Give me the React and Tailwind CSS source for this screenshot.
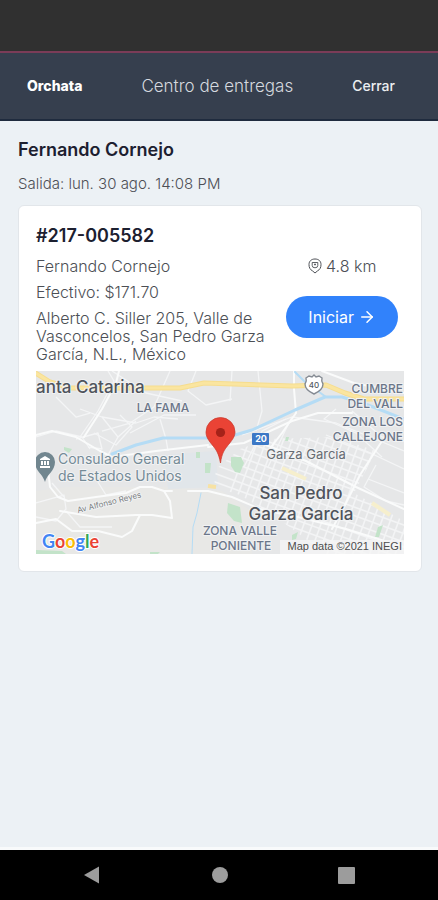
import { ArrowRight } from 'lucide-react';

const order = {
  number: '#217-005582',
  customer: 'Fernando Cornejo',
  payment: 'Efectivo: $171.70',
  address: 'Alberto C. Siller 205, Valle de Vasconcelos, San Pedro Garza García, N.L., México',
  distance: '4.8 km',
};

const thinRoads = [
  'M72 0 L78 10 L62 40 L44 66',
  'M134 0 L118 36 L94 52 L66 60',
  'M44 38 L66 46 L82 66 L72 84',
  'M66 46 L100 52 L118 46 L142 48',
  'M82 66 L100 50',
  'M58 62 L80 74 L96 56 L84 44',
  'M94 62 L128 44 L160 44',
  'M124 48 L130 68 L132 80',
  'M40 68 L62 62 L66 78 L52 76',
  'M0 66 L20 60 L46 66 L54 78',
  'M20 26 L40 46 L54 42',
  'M76 0 L110 22 L146 30',
  'M160 0 L152 20 L170 34 L196 28',
  'M196 0 L194 30',
  'M222 0 L226 40 L220 60',
  'M0 132 L28 124 L30 138 L20 150 L0 146',
  'M16 112 L28 126',
  'M30 140 L44 156 L76 156',
  'M60 108 L70 124 L90 120',
  'M206 64 L256 46 L300 52 L368 80',
  'M208 96 L226 60 L250 48',
  'M232 96 L248 62 L256 46',
  'M300 38 L288 48 L320 62 L346 86',
  'M316 40 L346 66 L368 70',
  'M290 64 L330 80 L368 98',
  'M340 94 L328 116 L350 130 L368 134',
  'M332 108 L368 122',
];

const wideRoads = [
  'M83 0 L80 12 L66 38 L48 66',
  'M12 98 L14 116 L22 126 L32 130 L60 126 L90 122 L104 116 L116 116 L128 120 L136 120',
  'M152 120 L172 120 L196 126 L224 138',
  'M0 64 L16 60 L40 66 L64 80 L76 86 L120 80 L172 74',
  'M0 152 L20 148 L36 160 L62 160 L86 166 L96 160 L104 144',
  'M24 140 L60 146 L100 144 L116 144 L136 147 L134 130 L128 120',
  'M172 76 L208 72 L256 50 L282 42 L316 42',
  'M258 0 L258 18 L260 42 L246 62 L232 80',
  'M286 0 L318 12 L368 22',
  'M224 138 L262 146 L310 158 L368 176',
  'M230 74 L270 90 L320 116 L368 138',
  'M346 70 L324 104 L310 132 L296 158',
];

// dense street grid around downtown, drawn slightly rotated
const gridColumns = Array.from({ length: 23 }, (_, i) => 200 + i * 8);
const gridRows = Array.from({ length: 14 }, (_, i) => 66 + i * 8);

const parks = [
  'M195 86 L205 86 L208 92 L204 102 L199 101 L195 95 Z',
  'M192 132 L204 136 L206 152 L198 150 L191 142 Z',
  'M169 92 L175 92 L174 102 L169 102 Z',
  'M160 81 L164 81 L164 87 L160 87 Z',
  'M28 76 L36 78 L33 82 L28 79 Z',
  'M0 179 L26 180 L30 183 L0 183 Z',
  'M114 181 L124 181 L122 183 L114 183 Z',
  'M342 156 L347 154 L343 166 L339 166 Z',
  'M256 164 L262 161 L260 168 L256 169 Z',
  'M250 66 L253 66 L252 70 L249 70 Z',
];

const labels = [
  { text: 'anta Catarina', x: 0, y: 22, size: 17, color: '#4f545c', weight: 500, anchor: 'start' },
  { text: 'LA FAMA', x: 127, y: 41, size: 12, color: '#6b7689', weight: 500, anchor: 'middle' },
  { text: 'CUMBRE', x: 367, y: 22, size: 12, color: '#6b7689', weight: 500, anchor: 'end' },
  { text: 'DEL VALL', x: 367, y: 37, size: 12, color: '#6b7689', weight: 500, anchor: 'end' },
  { text: 'ZONA LOS', x: 367, y: 55, size: 12, color: '#6b7689', weight: 500, anchor: 'end' },
  { text: 'CALLEJONE', x: 367, y: 70, size: 12, color: '#6b7689', weight: 500, anchor: 'end' },
  { text: 'Garza García', x: 270, y: 88, size: 13, color: '#666b72', weight: 400, anchor: 'middle' },
  { text: 'Consulado General', x: 22, y: 93, size: 14, color: '#758b97', weight: 400, anchor: 'start' },
  { text: 'de Estados Unidos', x: 22, y: 110, size: 14, color: '#758b97', weight: 400, anchor: 'start' },
  { text: 'San Pedro', x: 265, y: 128, size: 17, color: '#4f545c', weight: 500, anchor: 'middle' },
  { text: 'Garza García', x: 265, y: 149, size: 17, color: '#4f545c', weight: 500, anchor: 'middle' },
  { text: 'ZONA VALLE', x: 204, y: 164, size: 12, color: '#6b7689', weight: 500, anchor: 'middle' },
  { text: 'PONIENTE', x: 205, y: 179, size: 12, color: '#6b7689', weight: 500, anchor: 'middle' },
];

const highway = 'M-2 1 L14 11 L34 17 L114 17 L144 17 L168 12 L256 15 L290 14 L309 22 L328 28 L370 28';

function DeliveryMap() {
  return (
    <svg
      viewBox="0 0 368 183"
      className="block w-full h-auto font-['Inter','Roboto',sans-serif]"
      role="img"
      aria-label="Mapa"
    >
      <defs>
        <clipPath id="downtown">
          <path d="M180 98 L204 78 L232 68 L300 66 L340 80 L318 122 L368 150 L368 183 L290 183 L240 146 L204 124 L178 116 Z" />
        </clipPath>
      </defs>
      <rect width="368" height="183" fill="#e6e7e8" />
      <path d="M0 120 L30 116 L130 116 L186 120 L216 140 L216 183 L0 183 Z" fill="#e8e8e6" />
      <path d="M128 84 L180 80 L182 116 L132 118 Z" fill="#e1e6ea" />

      <g fill="none" stroke="#f4f5f6" strokeWidth="1.3" strokeLinejoin="round">
        {thinRoads.map((d) => <path key={d} d={d} />)}
      </g>

      <g clipPath="url(#downtown)">
        <g transform="rotate(20 280 120)" stroke="#f3f4f5" strokeWidth="1.6">
          {gridColumns.map((x) => <line key={x} x1={x} y1="40" x2={x} y2="210" />)}
          {gridRows.map((y) => <line key={y} x1="160" y1={y} x2="390" y2={y} />)}
        </g>
      </g>

      <g fill="#c3e3c9">
        {parks.map((d) => <path key={d} d={d} />)}
      </g>

      <g fill="none" stroke="#f6efcd" strokeWidth="4">
        <path d="M246 97 L270 108" />
        <path d="M336 132 L354 144" />
        <path d="M172 115 L180 116" stroke="#f7e2a4" />
      </g>

      <g fill="none" stroke="#fafbfb" strokeWidth="2" strokeLinejoin="round" strokeLinecap="round">
        {wideRoads.map((d) => <path key={d} d={d} />)}
      </g>

      {/* river */}
      <g fill="none" stroke="#b5dcf5" strokeLinejoin="round" strokeLinecap="round">
        <path d="M76 83 L100 74 L127 67 L171 67 L199 64 L216 59 L259 39 L289 26 L306 26 L332 34 L368 48" strokeWidth="3" />
        <path d="M259 1 L268 10 L290 26" strokeWidth="2" />
        <path d="M165 122 L161 142 L157 156 L156 183" strokeWidth="1" />
      </g>

      {/* highway */}
      <path d={highway} fill="none" stroke="#f6dd8e" strokeWidth="5" strokeLinejoin="round" />
      <path d={highway} fill="none" stroke="#fae5a0" strokeWidth="3" strokeLinejoin="round" />

      <path
        d="M270 7 L273 5 L276 6 L278 4 L280 6 L283 5 L286 7 Q285 10 287 13 Q287 19 278 23 Q269 19 269 13 Q271 10 270 7 Z"
        fill="#ffffff"
        stroke="#858b93"
        strokeWidth="1.4"
      />
      <text x="278" y="17" fontSize="8" fontWeight="500" fill="#555a61" textAnchor="middle">40</text>

      <rect x="216" y="62" width="17" height="12" rx="1" fill="#3c78c6" />
      <text x="225" y="71" fontSize="9" fontWeight="700" fill="#ffffff" textAnchor="middle">20</text>

      <g stroke="#f1f2f3" strokeWidth="2" paintOrder="stroke" strokeLinejoin="round">
        {labels.map((label) => (
          <text
            key={`${label.text}-${label.y}`}
            x={label.x}
            y={label.y}
            fontSize={label.size}
            fontWeight={label.weight}
            fill={label.color}
            textAnchor={label.anchor}
          >
            {label.text}
          </text>
        ))}
        <text transform="translate(42 142) rotate(-14)" fontSize="8" fill="#7a7d80">Av Alfonso Reyes</text>
      </g>

      {/* consulate marker */}
      <path d="M9 111 C7 103 -1 100 -1 91 A10 10 0 0 1 19 91 C19 100 11 103 9 111 Z" fill="#71868f" />
      <path d="M9 85 L14 88 V89 H4 V88 Z M5 90 H7 V94 H5 Z M8 90 H10 V94 H8 Z M11 90 H13 V94 H11 Z M4 95 H14 V97 H4 Z" fill="#ffffff" />

      {/* destination pin */}
      <path
        d="M184.500 92 C182.500 82 180.500 79 175.500 73 C171.500 68 170 65 170 61 A14.300 14.300 0 0 1 199 61 C199 65 197 68 193 73 C188 79 186 82 184.500 92 Z"
        fill="#ea4335"
        stroke="#c93a2d"
        strokeWidth="0.7"
      />
      <circle cx="184.5" cy="61.5" r="4.6" fill="#a52219" />

      <text
        x="6"
        y="177"
        fontSize="18"
        fontWeight="700"
        stroke="#ffffff"
        strokeWidth="2"
        paintOrder="stroke"
        className="font-['Lato',sans-serif]"
      >
        <tspan fill="#4285f4">G</tspan>
        <tspan fill="#ea4335">o</tspan>
        <tspan fill="#fbbc05">o</tspan>
        <tspan fill="#4285f4">g</tspan>
        <tspan fill="#34a853">l</tspan>
        <tspan fill="#ea4335">e</tspan>
      </text>

      <rect x="244" y="169" width="124" height="14" fill="#f5f5f5" fillOpacity="0.8" />
      <text x="366" y="179" fontSize="11" fill="#4d4d4d" textAnchor="end" className="font-['Liberation_Sans',sans-serif]">
        Map data ©2021 INEGI
      </text>
    </svg>
  );
}

function DistanceIcon() {
  return (
    <svg viewBox="0 0 14 16" className="h-4 w-[14px]" fill="none" stroke="currentColor" aria-hidden="true">
      <path d="M7 15 L4.500 12.900 C2 11.600 1 9.500 1 6.500 C1 3 3.500 1 7 1 C10.500 1 13 3 13 6.500 C13 9.500 12 11.600 9.500 12.900 Z" strokeLinejoin="round" />
      <path d="M4.200 4.500 H9.800 V7.500 Q9.800 9.800 7 9.800 Q4.200 9.800 4.200 7.500 Z" strokeWidth="0.9" />
      <path d="M7 5.500 V7.500 M6 6.500 H8" strokeWidth="0.8" />
    </svg>
  );
}

function OrderCard({ order }) {
  return (
    <article className="rounded-md border border-[#e2e6ea] bg-white p-[17px]">
      <h2 className="text-lg leading-[26px] font-semibold text-[#1c2030]">{order.number}</h2>
      <div className="mt-2 flex items-start justify-between gap-3">
        <div className="flex min-w-0 flex-1 flex-col gap-2 text-base leading-[18px] font-light text-[#4c4f55]">
          <p>{order.customer}</p>
          <p>{order.payment}</p>
          <p>{order.address}</p>
        </div>
        <div className="mr-[6px] flex flex-col items-center gap-[21px]">
          <p className="flex items-center gap-1 text-base leading-[18px] font-light text-[#4c4f55]">
            <DistanceIcon />
            {order.distance}
          </p>
          <button
            type="button"
            className="flex h-[42px] items-center gap-1 rounded-full bg-[#3182fb] px-[22px] text-base text-white"
          >
            Iniciar
            <ArrowRight size={18} strokeWidth={2} />
          </button>
        </div>
      </div>
      <div className="mt-2">
        <DeliveryMap />
      </div>
    </article>
  );
}

function SystemNav() {
  return (
    <nav className="flex h-[53px] items-center justify-between border-t-3 border-[#f8fafb] bg-black px-[83px] text-[#9c9c9c]">
      <button type="button" aria-label="Atrás">
        <svg viewBox="0 0 18 20" className="h-5 w-[18px]" fill="currentColor">
          <path d="M1 10 L16 1.500 V18.500 Z" />
        </svg>
      </button>
      <button type="button" aria-label="Inicio" className="size-4 rounded-full bg-[#9c9c9c]" />
      <button type="button" aria-label="Recientes" className="size-[17px] rounded-[1px] bg-[#9c9c9c]" />
    </nav>
  );
}

export default function App() {
  return (
    <div className="flex min-h-screen flex-col bg-[#ecf1f5] font-['Inter','Liberation_Sans',sans-serif]">
      <div className="h-[53px] border-b-2 border-[#7b3c58] bg-[#303030]" />
      <header className="flex h-[68px] items-center justify-between border-b-2 border-[#1f2b3e] bg-[#363f4e] pr-[43px] pl-[27px]">
        <a href="#" className="text-sm font-extrabold text-white">Orchata</a>
        <span className="text-[17px] leading-6 font-light text-[#d5d9df]">Centro de entregas</span>
        <button type="button" className="text-sm font-medium text-[#eceef1]">Cerrar</button>
      </header>
      <main className="flex-1 pt-4 pr-4 pl-[18px]">
        <h1 className="text-lg leading-[26px] font-semibold text-[#1c2030]">Fernando Cornejo</h1>
        <p className="mt-3 mb-3 text-[15px] leading-[18px] font-light text-[#4c4f55]">Salida: lun. 30 ago. 14:08 PM</p>
        <OrderCard order={order} />
      </main>
      <SystemNav />
    </div>
  );
}
